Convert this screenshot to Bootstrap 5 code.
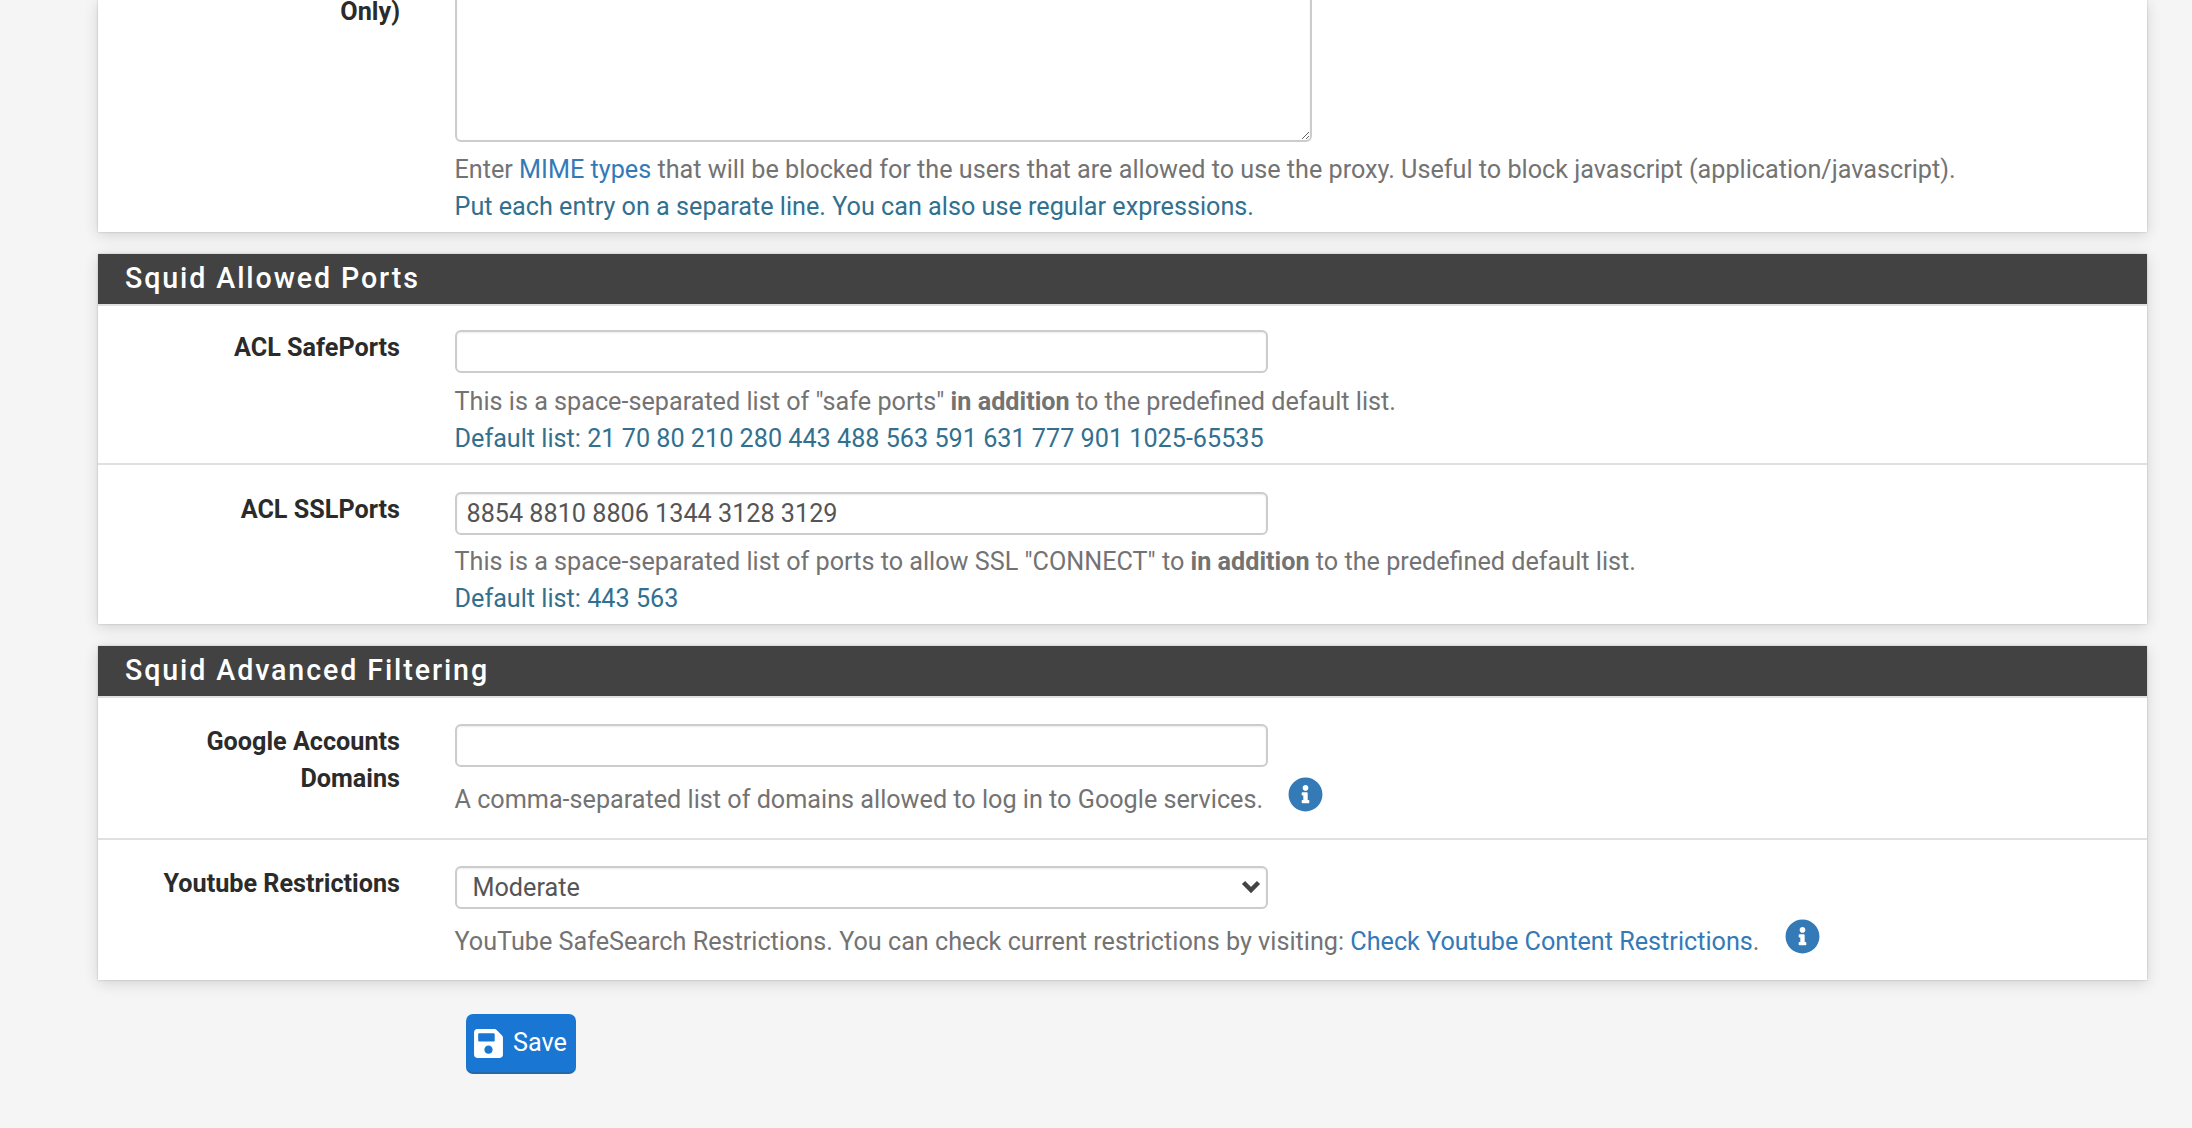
<!DOCTYPE html>
<html lang="en">
<head>
<meta charset="utf-8">
<title>Squid</title>
<link rel="stylesheet" href="https://cdn.jsdelivr.net/npm/bootstrap@5.3.0/dist/css/bootstrap.min.css">
<style>
html,body{height:100%;overflow:hidden}
body{background:#f5f5f5;font-family:Roboto,"Liberation Sans",sans-serif;font-size:25.2px;line-height:36.5px;color:#2b2b2b}
.sheet{padding:0 45px 0 98px}
.pane{border:0;border-radius:0;background:#fff;box-shadow:0 0 2px rgba(0,0,0,.2),0 3px 14px rgba(0,0,0,.14);margin-bottom:22px}
.pane-head{background:#424242;color:#fff;font-weight:500;font-size:28.6px;letter-spacing:1.9px;line-height:49px;padding:0 27px 1px;border-bottom:2px solid #e0e0e0;box-sizing:content-box;height:49px}
.entry{display:flex;border-bottom:2px solid #e0e0e0}
.entry:last-child{border-bottom:0}
.cap{flex:0 0 356.5px;text-align:right;padding-right:54.5px;font-weight:700;font-size:25.2px;margin:0}
.cap-top{margin-top:-6px}
.body-col{flex:1;min-width:0}
.box{display:block;width:813.5px;height:43px;padding:0 10px;font-size:25.2px;line-height:36px;color:#555;border:2.5px solid #ccc;border-radius:6px;background-color:#fff;box-shadow:inset 0 1px 2px rgba(0,0,0,.075)}
.area{width:857px;height:148px;margin-top:-6px;resize:both}
.pick{padding:2px 10px 0 16px;background-position:right 3px center;background-size:24px 24px;background-image:url("data:image/svg+xml,%3csvg xmlns='http://www.w3.org/2000/svg' viewBox='0 0 16 16'%3e%3cpath fill='none' stroke='%23444' stroke-width='3' d='m3 5 5 5 5-5'/%3e%3c/svg%3e")}
.note{color:#737373;margin:0}
.note strong{font-weight:700}
.note a{color:#337ab7;text-decoration:none}
.extra{color:#31708f;display:block}
.gap-a{margin-top:10px}
.gap-c{margin-top:11px}
.gap-d{margin-top:9px}
.gap-b{margin-top:15px}
.hint{width:35px;height:35px;fill:#337ab7;flex:none;margin-top:-5px}
.hint-line{display:flex;align-items:flex-start;gap:25px}
.go{background:#1976d2;border:0;border-bottom:2px solid #2368a9;border-radius:7px;color:#fff;font-size:25.2px;line-height:36px;height:60px;width:110px;padding:0 0 0 8px;display:flex;align-items:center;gap:10px;box-shadow:none}
.go svg{width:29px;height:33px;fill:#fff;flex:none}
.go-row{padding-left:368px;padding-top:12px}
</style>
</head>
<body>
<main class="sheet">
  <section class="card pane">
    <div class="entry" style="padding:0 0 7px">
      <label class="cap cap-top">Only)</label>
      <div class="body-col">
        <textarea class="form-control box area"></textarea>
        <p class="note gap-a">Enter <a href="#">MIME types</a> that will be blocked for the users that are allowed to use the proxy. Useful to block javascript (application/javascript).<span class="extra">Put each entry on a separate line. You can also use regular expressions.</span></p>
      </div>
    </div>
  </section>
  <section class="card pane">
    <h2 class="pane-head m-0">Squid Allowed Ports</h2>
    <div class="entry" style="padding:24px 0 6px">
      <label class="cap">ACL SafePorts</label>
      <div class="body-col">
        <input class="form-control box" type="text">
        <p class="note gap-c">This is a space-separated list of "safe ports" <strong>in addition</strong> to the predefined default list.<span class="extra">Default list: 21 70 80 210 280 443 488 563 591 631 777 901 1025-65535</span></p>
      </div>
    </div>
    <div class="entry" style="padding:27px 0 7px">
      <label class="cap">ACL SSLPorts</label>
      <div class="body-col">
        <input class="form-control box" type="text" value="8854 8810 8806 1344 3128 3129">
        <p class="note gap-d">This is a space-separated list of ports to allow SSL "CONNECT" to <strong>in addition</strong> to the predefined default list.<span class="extra">Default list: 443 563</span></p>
      </div>
    </div>
  </section>
  <section class="card pane">
    <h2 class="pane-head m-0">Squid Advanced Filtering</h2>
    <div class="entry" style="padding:26px 0 19px">
      <label class="cap">Google Accounts<br>Domains</label>
      <div class="body-col">
        <input class="form-control box" type="text">
        <div class="hint-line gap-b">
          <p class="note">A comma-separated list of domains allowed to log in to Google services.</p>
          <svg class="hint" viewBox="0 0 512 512"><path d="M256 8C119.043 8 8 119.083 8 256c0 136.997 111.043 248 248 248s248-111.003 248-248C504 119.083 392.957 8 256 8zm0 110c23.196 0 42 18.804 42 42s-18.804 42-42 42-42-18.804-42-42 18.804-42 42-42zm56 254c0 6.627-5.373 12-12 12h-88c-6.627 0-12-5.373-12-12v-24c0-6.627 5.373-12 12-12h12v-64h-12c-6.627 0-12-5.373-12-12v-24c0-6.627 5.373-12 12-12h64c6.627 0 12 5.373 12 12v100h12c6.627 0 12 5.373 12 12v24z"/></svg>
        </div>
      </div>
    </div>
    <div class="entry" style="padding:26px 0 20px">
      <label class="cap">Youtube Restrictions</label>
      <div class="body-col">
        <select class="form-select box pick"><option>Moderate</option></select>
        <div class="hint-line gap-b">
          <p class="note">YouTube SafeSearch Restrictions. You can check current restrictions by visiting: <a href="#">Check Youtube Content Restrictions</a>.</p>
          <svg class="hint" viewBox="0 0 512 512"><path d="M256 8C119.043 8 8 119.083 8 256c0 136.997 111.043 248 248 248s248-111.003 248-248C504 119.083 392.957 8 256 8zm0 110c23.196 0 42 18.804 42 42s-18.804 42-42 42-42-18.804-42-42 18.804-42 42-42zm56 254c0 6.627-5.373 12-12 12h-88c-6.627 0-12-5.373-12-12v-24c0-6.627 5.373-12 12-12h12v-64h-12c-6.627 0-12-5.373-12-12v-24c0-6.627 5.373-12 12-12h64c6.627 0 12 5.373 12 12v100h12c6.627 0 12 5.373 12 12v24z"/></svg>
        </div>
      </div>
    </div>
  </section>
  <div class="go-row">
    <button class="btn go" type="button"><svg viewBox="0 0 448 512"><path d="M433.941 129.941l-83.882-83.882A48 48 0 0 0 316.118 32H48C21.49 32 0 53.49 0 80v352c0 26.51 21.49 48 48 48h352c26.51 0 48-21.49 48-48V163.882a48 48 0 0 0-14.059-33.941zM224 416c-35.346 0-64-28.654-64-64 0-35.346 28.654-64 64-64s64 28.654 64 64c0 35.346-28.654 64-64 64zm96-304.52V212c0 6.627-5.373 12-12 12H76c-6.627 0-12-5.373-12-12V108c0-6.627 5.373-12 12-12h228.52c3.183 0 6.235 1.264 8.485 3.515l3.48 3.48A11.996 11.996 0 0 1 320 111.48z"/></svg>Save</button>
  </div>
</main>
</body>
</html>
